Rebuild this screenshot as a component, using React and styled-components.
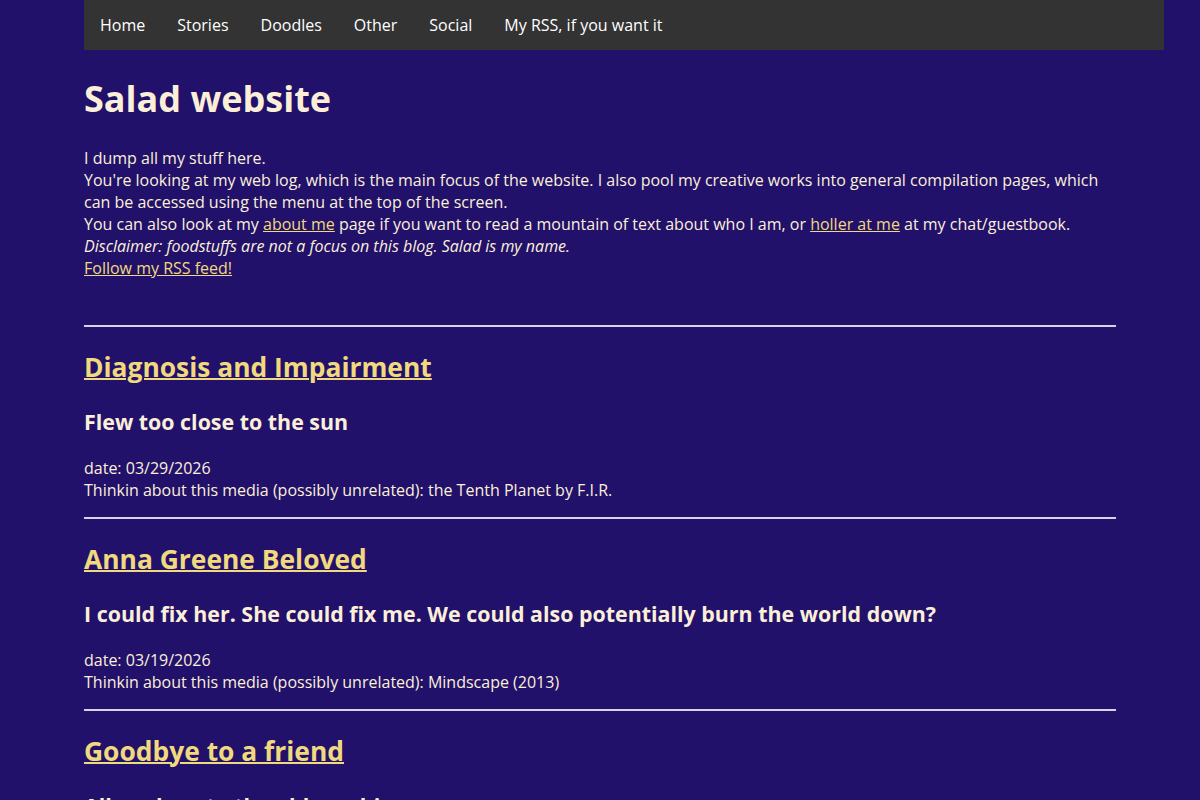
import React from "react";
import styled, { createGlobalStyle } from "styled-components";

const GlobalStyle = createGlobalStyle`
  html, body {
    margin: 0;
    padding: 0;
    background: #21116b;
  }
  body {
    font-family: "Open Sans", "DejaVu Sans", sans-serif;
    font-size: 16px;
    color: #fcefd8;
  }
`;

const Page = styled.div`
  padding-left: 84px;
`;

const Nav = styled.nav`
  width: 1080px;
  height: 50px;
  background: #333333;
  display: flex;
  align-items: center;
`;

const NavLink = styled.a`
  color: #ffffff;
  text-decoration: none;
  font-size: 16px;
  padding: 0 16px;
  line-height: 50px;
`;

const Main = styled.main`
  width: 1032px;
`;

const Title = styled.h1`
  font-size: 36px;
  font-weight: 700;
  line-height: 49px;
  margin: 24px 0 24px;
  color: #fcefd8;
`;

const Intro = styled.p`
  margin: 0;
  line-height: 22px;
`;

const Link = styled.a`
  color: #f1d97d;
  text-decoration: underline;
`;

const Rule = styled.hr`
  border: none;
  border-top: 2px solid #d9d3ea;
  margin: ${(p) => (p.$first ? "46px 0 0" : "16px 0 0")};
`;

const Post = styled.article``;

const PostTitle = styled.h2`
  font-size: 26.4px;
  font-weight: 700;
  line-height: 36px;
  margin: 22px 0 0;
  a {
    color: #f1d97d;
    text-decoration: underline;
    text-decoration-thickness: 2px;
  }
`;

const PostTagline = styled.h3`
  font-size: 21.4px;
  font-weight: 700;
  line-height: 30px;
  margin: 22px 0 0;
  color: #fcefd8;
`;

const Meta = styled.div`
  margin-top: 20px;
  line-height: 22px;
`;

const links = ["Home", "Stories", "Doodles", "Other", "Social", "My RSS, if you want it"];

const posts = [
  {
    title: "Diagnosis and Impairment",
    tagline: "Flew too close to the sun",
    date: "03/29/2026",
    media: "the Tenth Planet by F.I.R.",
  },
  {
    title: "Anna Greene Beloved",
    tagline: "I could fix her. She could fix me. We could also potentially burn the world down?",
    date: "03/19/2026",
    media: "Mindscape (2013)",
  },
  {
    title: "Goodbye to a friend",
    tagline: "All my love to the old machine",
    date: "03/02/2026",
    media: "Goodbye Horses by Q Lazzarus",
  },
];

export default function App() {
  return (
    <Page>
      <GlobalStyle />
      <Nav>
        {links.map((name) => (
          <NavLink href="#" key={name}>
            {name}
          </NavLink>
        ))}
      </Nav>
      <Main>
        <Title>Salad website</Title>
        <Intro>
          I dump all my stuff here.
          <br />
          You're looking at my web log, which is the main focus of the website. I also pool my
          creative works into general compilation pages, which can be accessed using the menu at
          the top of the screen.
          <br />
          You can also look at my <Link href="#">about me</Link> page if you want to read a
          mountain of text about who I am, or <Link href="#">holler at me</Link> at my
          chat/guestbook.
          <br />
          <i>Disclaimer: foodstuffs are not a focus on this blog. Salad is my name.</i>
          <br />
          <Link href="#">Follow my RSS feed!</Link>
        </Intro>
        {posts.map((post, i) => (
          <Post key={post.title}>
            <Rule $first={i === 0} />
            <PostTitle>
              <a href="#">{post.title}</a>
            </PostTitle>
            <PostTagline>{post.tagline}</PostTagline>
            <Meta>
              date: {post.date}
              <br />
              Thinkin about this media (possibly unrelated): {post.media}
            </Meta>
          </Post>
        ))}
      </Main>
    </Page>
  );
}
